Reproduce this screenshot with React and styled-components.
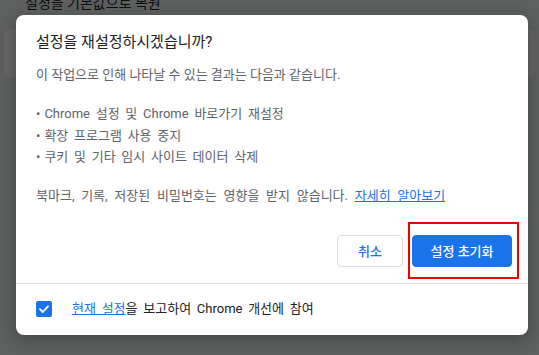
import React from 'react';
import styled, {createGlobalStyle} from 'styled-components';

const GlobalStyle = createGlobalStyle`
  html, body {
    margin: 0;
    padding: 0;
    width: 539px;
    height: 355px;
    overflow: hidden;
    background: #f1f3f4;
    font-family: Roboto, "Noto Sans CJK KR", sans-serif;
  }
`;

const Page = styled.div`
  position: relative;
  width: 539px;
  height: 355px;
  overflow: hidden;
  background: #eceff1;
`;

const SectionLabel = styled.div`
  margin: -7px 0 0 25px;
  font-size: 14px;
  line-height: 20px;
  color: #202124;
`;

const SettingsCard = styled.div`
  margin: 16px 4px 0 4px;
  height: 48px;
  background: #ffffff;
  border-radius: 8px;
`;

const Overlay = styled.div`
  position: absolute;
  inset: 0;
  background: rgba(0, 0, 0, 0.6);
  padding: 15px 11px 0 16px;
`;

const Dialog = styled.div`
  width: 512px;
  height: 320px;
  box-sizing: border-box;
  background: #ffffff;
  border-radius: 8px;
  box-shadow: 0 4px 16px rgba(0, 0, 0, 0.3);
  display: flex;
  flex-direction: column;
  overflow: hidden;
`;

const Body = styled.div`
  padding: 17px 16px 16px 20px;
`;

const Title = styled.h2`
  margin: 0;
  font-size: 15px;
  font-weight: 400;
  line-height: 20px;
  color: #202124;
`;

const Text = styled.p`
  margin: ${({$top}) => $top}px 0 0;
  font-size: 13px;
  line-height: 20px;
  color: #5f6368;
  word-spacing: ${({$wide}) => ($wide ? 3.5 : 0)}px;
`;

const List = styled.ul`
  margin: 18px 0 0;
  padding: 0;
  list-style: none;
`;

const Item = styled.li`
  font-size: 13px;
  line-height: 21.5px;
  color: #5f6368;
  word-spacing: 2.5px;
  &::before {
    content: '•';
    margin-right: 4px;
  }
`;

const Link = styled.a`
  color: #1a73e8;
  text-decoration: underline;
  cursor: pointer;
`;

const Actions = styled.div`
  display: flex;
  justify-content: flex-end;
  gap: 9px;
  margin-top: 29px;
`;

const Button = styled.button`
  height: 32px;
  box-sizing: border-box;
  padding: 0 ${({$primary}) => ($primary ? 16 : 20)}px;
  min-width: ${({$primary}) => ($primary ? 100 : 66)}px;
  border-radius: 4px;
  border: 1px solid ${({$primary}) => ($primary ? '#1a73e8' : '#dadce0')};
  background: ${({$primary}) => ($primary ? '#1a73e8' : '#ffffff')};
  color: ${({$primary}) => ($primary ? '#ffffff' : '#1a73e8')};
  font-family: Roboto, "Noto Sans CJK KR", sans-serif;
  font-size: 13px;
  font-weight: 500;
`;

const Highlight = styled.div`
  position: relative;
  display: flex;
  &::after {
    content: '';
    position: absolute;
    left: -4px;
    right: -7px;
    top: -13px;
    bottom: -12px;
    border: 2px solid #ee0000;
    pointer-events: none;
  }
`;

const Footer = styled.div`
  flex: 1;
  border-top: 1px solid #dadce0;
  display: flex;
  align-items: center;
  gap: 20px;
  padding: 0 20px 0 20px;
`;

const Checkbox = styled.span`
  width: 16px;
  height: 16px;
  border-radius: 2px;
  background: #1a73e8;
  display: inline-flex;
  align-items: center;
  justify-content: center;
  flex-shrink: 0;
`;

const FooterLabel = styled.span`
  font-size: 13px;
  line-height: 20px;
  color: #202124;
  word-spacing: 2.5px;
`;

export default function App() {
  return (
    <Page>
      <GlobalStyle />
      <SectionLabel>설정을 기본값으로 복원</SectionLabel>
      <SettingsCard />
      <Overlay>
        <Dialog>
          <Body>
            <Title>설정을 재설정하시겠습니까?</Title>
            <Text $top={13}>이 작업으로 인해 나타날 수 있는 결과는 다음과 같습니다.</Text>
            <List>
              <Item>Chrome 설정 및 Chrome 바로가기 재설정</Item>
              <Item>확장 프로그램 사용 중지</Item>
              <Item>쿠키 및 기타 임시 사이트 데이터 삭제</Item>
            </List>
            <Text $top={18} $wide>
              북마크, 기록, 저장된 비밀번호는 영향을 받지 않습니다. <Link>자세히 알아보기</Link>
            </Text>
            <Actions>
              <Button>취소</Button>
              <Highlight>
                <Button $primary>설정 초기화</Button>
              </Highlight>
            </Actions>
          </Body>
          <Footer>
            <Checkbox>
              <svg width="12" height="12" viewBox="0 0 12 12">
                <path d="M2 6.2 L4.8 9 L10 3.4" fill="none" stroke="#ffffff" strokeWidth="1.8" strokeLinecap="round" strokeLinejoin="round" />
              </svg>
            </Checkbox>
            <FooterLabel>
              <Link>현재 설정</Link>을 보고하여 Chrome 개선에 참여
            </FooterLabel>
          </Footer>
        </Dialog>
      </Overlay>
    </Page>
  );
}
